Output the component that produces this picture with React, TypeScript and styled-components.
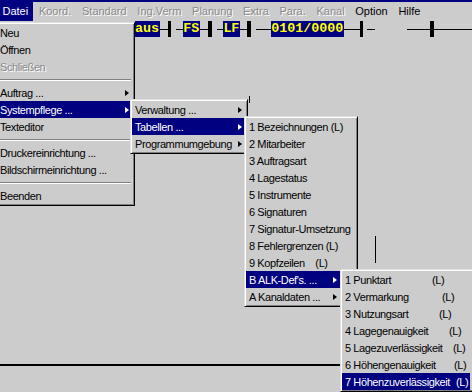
import React from 'react';
import styled, { createGlobalStyle } from 'styled-components';

const GlobalStyle = createGlobalStyle`
	html, body {
		margin: 0;
		padding: 0;
		background: #cccccc;
	}

	body {
		width: 472px;
		height: 392px;
		overflow: hidden;
		font-family: 'Liberation Sans', Arial, sans-serif;
		font-size: 11px;
	}
`;

const Screen = styled.div`
	position: relative;
	display: flex;
	flex-direction: column;
	width: 472px;
	height: 392px;
	overflow: hidden;
	background-color: #cccccc;
`;

const TitleStrip = styled.div`
	flex: none;
	height: 2px;
	background-color: #000080;
`;

const MenuBar = styled.div`
	flex: none;
	display: flex;
	height: 19px;
	margin-left: -3px;
`;

const BarItem = styled.div<{ $active?: boolean; $disabled?: boolean }>`
	padding: 0 5.2px 0 5.5px;
	line-height: 19px;
	white-space: nowrap;
	background-color: ${({ $active }) => ($active ? '#000080' : 'transparent')};
	color: ${({ $active, $disabled }) => ($active ? '#fff' : $disabled ? '#8a8a8a' : '#000')};
	text-shadow: ${({ $disabled }) => ($disabled ? '1px 1px 0 #fff' : 'none')};
`;

const Workspace = styled.div`
	position: relative;
	flex: 1;
	display: flex;
	flex-direction: column;
`;

const FieldRow = styled.div`
	display: flex;
	align-items: center;
	height: 16px;
	padding-left: 135px;
`;

const Field = styled.div`
	height: 16px;
	line-height: 16px;
	padding-right: 1px;
	background-color: #000080;
	color: #ffff00;
	font-family: 'Liberation Mono', 'Courier New', monospace;
	font-size: 13.33px;
	font-weight: bold;
	white-space: pre;
`;

const Rule = styled.div<{ $w: number; $gap?: number }>`
	width: ${({ $w }) => $w}px;
	margin-left: ${({ $gap }) => $gap ?? 0}px;
	height: 1px;
	background-color: #000;
`;

const Bar = styled.div`
	width: 4px;
	height: 16px;
	background-color: #000;
`;

const FormArea = styled.div`
	height: 327px;
	border-bottom: 2px solid #000;
`;

const FormLines = styled.svg`
	position: absolute;
	inset: 0;
	width: 100%;
	height: 100%;
	pointer-events: none;
`;

const Menu = styled.div<{ $x: number; $y: number; $w: number }>`
	position: absolute;
	left: ${({ $x }) => $x}px;
	top: ${({ $y }) => $y}px;
	width: ${({ $w }) => $w}px;
	box-sizing: border-box;
	padding: 1px 3px 1px 1px;
	border: 1px solid;
	border-color: #dfdfdf #000 #000 #dfdfdf;
	box-shadow: inset 1px 1px #fff, inset -1px -1px #808080;
	background-color: #cccccc;
`;

const Item = styled.div<{ $hi?: boolean; $off?: boolean }>`
	display: flex;
	align-items: center;
	height: 17px;
	padding: 0 2px 0 3px;
	letter-spacing: -0.4px;
	white-space: pre;
	background-color: ${({ $hi }) => ($hi ? '#000080' : 'transparent')};
	color: ${({ $hi, $off }) => ($hi ? '#fff' : $off ? '#8a8a8a' : '#000')};
	text-shadow: ${({ $off }) => ($off ? '1px 1px 0 #fff' : 'none')};
`;

const Label = styled.span<{ $tab?: number }>`
	display: inline-block;
	flex: none;
	min-width: ${({ $tab }) => ($tab ? `${$tab}px` : 'auto')};
`;

const Arrow = styled.span<{ $free?: boolean }>`
	flex: none;
	margin-left: ${({ $free }) => ($free ? '0' : 'auto')};
	width: 0;
	height: 0;
	border-left: 4px solid currentColor;
	border-top: 3.5px solid transparent;
	border-bottom: 3.5px solid transparent;
`;

const Separator = styled.div`
	display: flex;
	align-items: center;
	height: 9px;

	&::after {
		content: '';
		flex: 1;
		border-top: 1px solid #808080;
		border-bottom: 1px solid #fff;
	}
`;

const menuBar = [
	{ label: 'Datei', active: true },
	{ label: 'Koord.', disabled: true },
	{ label: 'Standard', disabled: true },
	{ label: 'Ing.Verm', disabled: true },
	{ label: 'Planung', disabled: true },
	{ label: 'Extra', disabled: true },
	{ label: 'Para.', disabled: true },
	{ label: 'Kanal', disabled: true },
	{ label: 'Option' },
	{ label: 'Hilfe' },
];

const tabellen = [
	'1 Bezeichnungen (L)',
	'2 Mitarbeiter',
	'3 Auftragsart',
	'4 Lagestatus',
	'5 Instrumente',
	'6 Signaturen',
	'7 Signatur-Umsetzung',
	'8 Fehlergrenzen (L)',
	'9 Kopfzeilen    (L)',
];

const alkDefs = [
	{ label: '1 Punktart', tab: 87 },
	{ label: '2 Vermarkung', tab: 97 },
	{ label: '3 Nutzungsart', tab: 94 },
	{ label: '4 Lagegenauigkeit', tab: 104 },
	{ label: '5 Lagezuverlässigkeit', tab: 108 },
	{ label: '6 Höhengenauigkeit', tab: 109 },
	{ label: '7 Höhenzuverlässigkeit', tab: 111 },
];

export default function App() {
	return (
		<>
			<GlobalStyle />
			<Screen>
				<TitleStrip />
				<MenuBar>
					{menuBar.map((m) => (
						<BarItem key={m.label} $active={m.active} $disabled={m.disabled}>
							{m.label}
						</BarItem>
					))}
				</MenuBar>
				<Workspace>
					<FieldRow>
						<Field>aus</Field>
						<Rule $w={8} />
						<Bar />
						<Rule $w={7} $gap={5} />
						<Field>FS</Field>
						<Rule $w={8} />
						<Bar />
						<Rule $w={7} $gap={5} />
						<Field>LF</Field>
						<Rule $w={7} />
						<Bar />
						<Rule $w={16} $gap={5} />
						<Field>0101/0000</Field>
						<Rule $w={16} />
						<Bar />
						<Rule $w={8} $gap={4} />
						<Rule $w={24} $gap={32} />
						<Bar />
						<Rule $w={40} />
					</FieldRow>
					<FormArea />
					<FormLines>
						<line x1="249.5" y1="75" x2="249.5" y2="82" stroke="#000" />
						<line x1="375.5" y1="215" x2="375.5" y2="242" stroke="#000" />
					</FormLines>
				</Workspace>

				<Menu $x={-5} $y={22} $w={140}>
					<Item>Neu</Item>
					<Item>Öffnen</Item>
					<Item $off>Schließen</Item>
					<Separator />
					<Item>
						Auftrag ...
						<Arrow />
					</Item>
					<Item $hi>
						Systempflege ...
						<Arrow />
					</Item>
					<Item>Texteditor</Item>
					<Separator />
					<Item>Druckereinrichtung ...</Item>
					<Item>Bildschirmeinrichtung ...</Item>
					<Separator />
					<Item>Beenden</Item>
				</Menu>

				<Menu $x={130} $y={99} $w={118}>
					<Item>
						Verwaltung ...
						<Arrow />
					</Item>
					<Item $hi>
						Tabellen ...
						<Arrow />
					</Item>
					<Item>
						Programmumgebung
						<Arrow />
					</Item>
				</Menu>

				<Menu $x={244} $y={116} $w={114}>
					{tabellen.map((t) => (
						<Item key={t}>{t}</Item>
					))}
					<Item $hi>
						<Label $tab={84}>B ALK-Def's. ...</Label>
						<Arrow $free />
					</Item>
					<Item>
						<Label $tab={84}>A Kanaldaten ...</Label>
						<Arrow $free />
					</Item>
				</Menu>

				<Menu $x={340} $y={269} $w={134}>
					{alkDefs.map((a, i) => (
						<Item key={a.label} $hi={i === alkDefs.length - 1}>
							<Label $tab={a.tab}>{a.label}</Label>(L)
						</Item>
					))}
				</Menu>
			</Screen>
		</>
	);
}
